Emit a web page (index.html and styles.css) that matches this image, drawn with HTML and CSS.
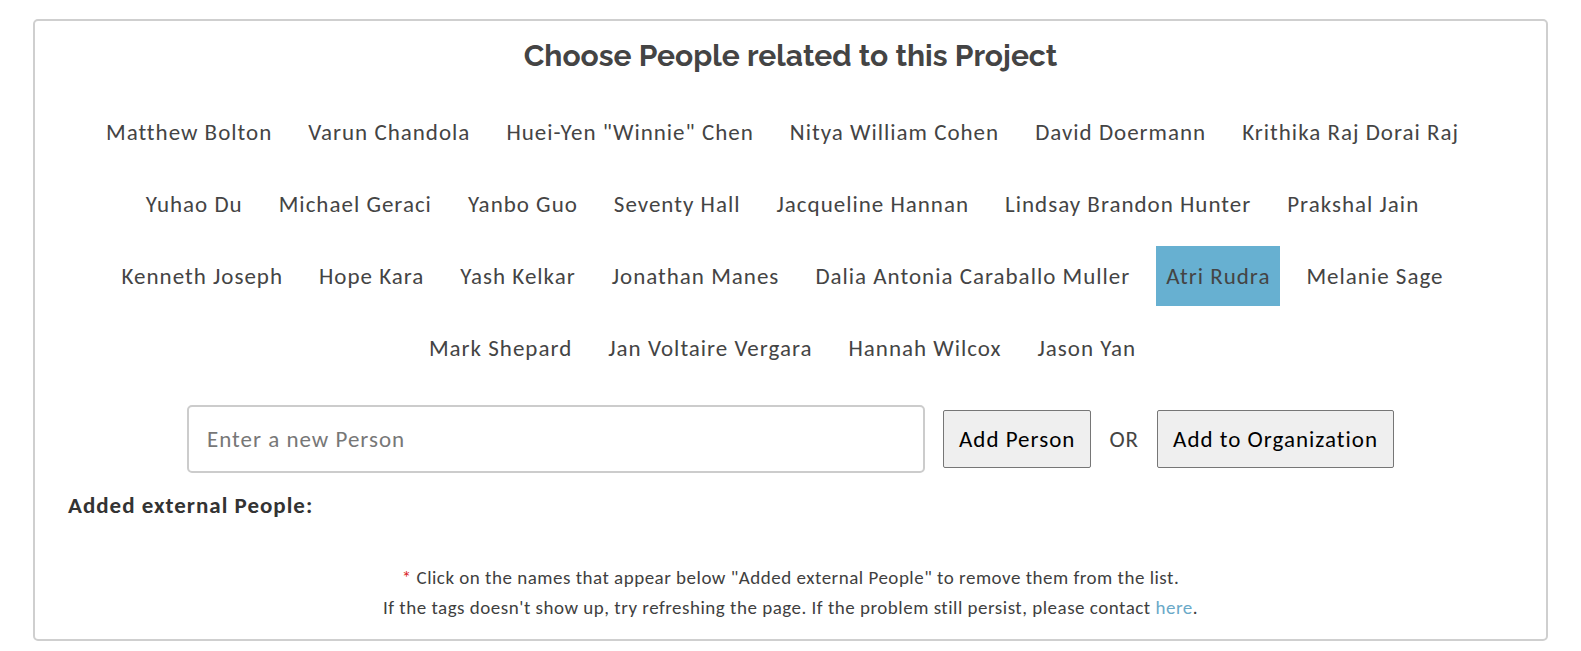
FILE: index.html
```html
<!DOCTYPE html>
<html>
<head>
<meta charset="utf-8">
<link rel="stylesheet" href="styles.css">
</head>
<body>
<div class="box">
  <h2 class="title">Choose People related to this Project</h2>
  <div class="people">
    <div class="row">
      <span class="tag">Matthew Bolton</span>
      <span class="tag">Varun Chandola</span>
      <span class="tag">Huei-Yen "Winnie" Chen</span>
      <span class="tag">Nitya William Cohen</span>
      <span class="tag">David Doermann</span>
      <span class="tag">Krithika Raj Dorai Raj</span>
    </div>
    <div class="row">
      <span class="tag">Yuhao Du</span>
      <span class="tag">Michael Geraci</span>
      <span class="tag">Yanbo Guo</span>
      <span class="tag">Seventy Hall</span>
      <span class="tag">Jacqueline Hannan</span>
      <span class="tag">Lindsay Brandon Hunter</span>
      <span class="tag">Prakshal Jain</span>
    </div>
    <div class="row">
      <span class="tag">Kenneth Joseph</span>
      <span class="tag">Hope Kara</span>
      <span class="tag">Yash Kelkar</span>
      <span class="tag">Jonathan Manes</span>
      <span class="tag">Dalia Antonia Caraballo Muller</span>
      <span class="tag selected">Atri Rudra</span>
      <span class="tag">Melanie Sage</span>
    </div>
    <div class="row">
      <span class="tag">Mark Shepard</span>
      <span class="tag">Jan Voltaire Vergara</span>
      <span class="tag">Hannah Wilcox</span>
      <span class="tag">Jason Yan</span>
    </div>
  </div>
  <div class="add-row">
    <input class="person-input" type="text" placeholder="Enter a new Person">
    <button class="btn">Add Person</button>
    <span class="or">OR</span>
    <button class="btn">Add to Organization</button>
  </div>
  <div class="added-label">Added external People:</div>
  <div class="added-list"></div>
  <div class="notes">
    <p><span class="star">*</span> Click on the names that appear below "Added external People" to remove them from the list.</p>
    <p>If the tags doesn't show up, try refreshing the page. If the problem still persist, please contact <a class="link" href="#">here</a>.</p>
  </div>
</div>
</body>
</html>
```

FILE: styles.css
```css
html, body {
  margin: 0;
  padding: 0;
  background: #fff;
}
body {
  font-family: Calibri, Carlito, Lato, "Liberation Sans", sans-serif;
  color: #444;
}
.box {
  margin: 19px 33px 0;
  border: 2px solid #cfcfcf;
  border-radius: 5px;
  padding: 0 0 16px;
  box-sizing: border-box;
}
.title {
  margin: 15px 0 0;
  font-family: Raleway, Lato, "Open Sans", sans-serif;
  font-weight: 700;
  font-size: 30px;
  line-height: 40px;
  text-align: center;
  color: #444;
}
.people {
  margin-top: 26px;
  display: flex;
  flex-direction: column;
  gap: 12px;
}
.row {
  display: flex;
  justify-content: center;
}
.tag {
  height: 60px;
  display: flex;
  align-items: center;
  padding: 0 10px;
  margin-right: 16px;
  font-size: 23px;
  letter-spacing: 1px;
  color: #444;
  cursor: pointer;
}
.tag.selected {
  background: #67b0d1;
}
.add-row {
  margin-top: 27px;
  display: flex;
  justify-content: center;
  align-items: center;
  gap: 18px;
}
.person-input {
  width: 738px;
  height: 68px;
  box-sizing: border-box;
  border: 2px solid #cccccc;
  border-radius: 5px;
  padding: 0 18px;
  font-family: inherit;
  font-size: 23px;
  letter-spacing: 1px;
  color: #444;
  outline: none;
}
.person-input::placeholder {
  color: #777;
}
.btn {
  height: 58px;
  box-sizing: border-box;
  padding: 0 15px;
  background: #efefef;
  border: 1px solid #767676;
  border-radius: 2px;
  font-family: inherit;
  font-size: 23px;
  letter-spacing: 1px;
  color: #000;
}
.or {
  font-size: 23px;
  letter-spacing: 1px;
  color: #444;
}
.added-label {
  margin: 18px 0 0 33px;
  font-size: 23px;
  letter-spacing: 1px;
  font-weight: 700;
  line-height: 28px;
  color: #333;
}
.added-list {
  height: 44px;
}
.notes {
  text-align: center;
  font-size: 19px;
  letter-spacing: 0.5px;
  line-height: 30px;
  color: #3f3f3f;
}
.notes p {
  margin: 0;
}
.star {
  color: #d9221c;
}
.link {
  color: #6aa9c8;
  text-decoration: none;
}
```
